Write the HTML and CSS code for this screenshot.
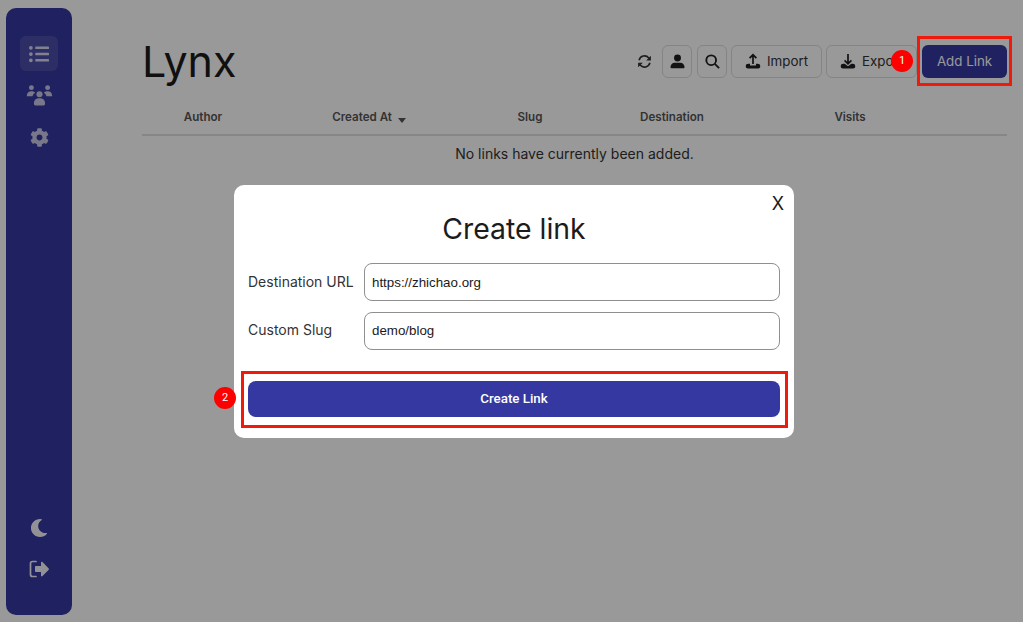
FILE: index.html
```html
<!DOCTYPE html>
<html lang="en">
<head>
<meta charset="utf-8">
<title>Lynx</title>
<link rel="stylesheet" href="styles.css">
</head>
<body>
<div class="app">
  <aside class="sidebar">
    <nav class="side-group">
      <a class="side-item active"><svg class="side-icon list" viewBox="0 0 512 512"><path d="M48 48a48 48 0 1 0 48 48 48 48 0 0 0-48-48zm0 160a48 48 0 1 0 48 48 48 48 0 0 0-48-48zm0 160a48 48 0 1 0 48 48 48 48 0 0 0-48-48zm448 16H176a16 16 0 0 0-16 16v32a16 16 0 0 0 16 16h320a16 16 0 0 0 16-16v-32a16 16 0 0 0-16-16zm0-320H176a16 16 0 0 0-16 16v32a16 16 0 0 0 16 16h320a16 16 0 0 0 16-16V80a16 16 0 0 0-16-16zm0 160H176a16 16 0 0 0-16 16v32a16 16 0 0 0 16 16h320a16 16 0 0 0 16-16v-32a16 16 0 0 0-16-16z"/></svg></a>
      <a class="side-item"><svg class="side-icon wide" viewBox="0 0 640 512"><circle cx="128" cy="70" r="58"/><circle cx="512" cy="70" r="58"/><circle cx="320" cy="226" r="72"/><path d="M20 270c0-72 40-114 108-114 40 0 70 12 88 36-34 20-54 46-60 84H48c-16 0-28 0-28-6zM620 270c0-72-40-114-108-114-40 0-70 12-88 36 34 20 54 46 60 84h108c16 0 28 0 28-6zM320 322c84 0 132 44 132 126 0 30-14 44-36 44H224c-22 0-36-14-36-44 0-82 48-126 132-126z"/></svg></a>
      <a class="side-item"><svg class="side-icon" viewBox="0 0 512 512"><path d="M487.4 315.7l-42.6-24.6c4.3-23.2 4.3-47 0-70.2l42.6-24.6c4.9-2.8 7.1-8.6 5.5-14-11.1-35.6-30-67.8-54.7-94.6-3.8-4.1-10-5.1-14.8-2.3L380.8 110c-17.9-15.4-38.5-27.3-60.8-35.1V25.8c0-5.6-3.9-10.5-9.4-11.7-36.7-8.2-74.3-7.8-109.2 0-5.5 1.2-9.4 6.1-9.4 11.7V75c-22.2 7.9-42.8 19.8-60.8 35.1L88.7 85.5c-4.9-2.8-11-1.9-14.8 2.3-24.7 26.7-43.6 58.9-54.7 94.6-1.7 5.4.6 11.2 5.5 14L67.3 221c-4.3 23.2-4.3 47 0 70.2l-42.6 24.6c-4.9 2.8-7.1 8.6-5.5 14 11.1 35.6 30 67.8 54.7 94.6 3.8 4.1 10 5.1 14.8 2.3l42.6-24.6c17.9 15.4 38.5 27.3 60.8 35.1v49.2c0 5.6 3.9 10.5 9.4 11.7 36.7 8.2 74.3 7.8 109.2 0 5.5-1.2 9.4-6.1 9.4-11.7v-49.2c22.2-7.9 42.8-19.8 60.8-35.1l42.6 24.6c4.9 2.8 11 1.9 14.8-2.3 24.7-26.7 43.6-58.9 54.7-94.6 1.5-5.5-.7-11.3-5.6-14.1zM256 336c-44.1 0-80-35.9-80-80s35.9-80 80-80 80 35.9 80 80-35.9 80-80 80z"/></svg></a>
    </nav>
    <nav class="side-group side-bottom">
      <a class="side-item"><svg class="side-icon moon" viewBox="0 0 512 512"><path d="M283.211 512c78.962 0 151.079-35.925 198.857-94.792 7.068-8.708-.639-21.43-11.562-19.35-124.2 23.654-238.256-71.576-238.256-196.954 0-72.222 38.662-138.635 101.498-174.394 9.686-5.512 7.25-20.197-3.756-22.23A258.156 258.156 0 0 0 283.211 0c-141.309 0-256 114.511-256 256 0 141.309 114.511 256 256 256z"/></svg></a>
      <a class="side-item"><svg class="side-icon logout" viewBox="0 0 20 20"><path class="bracket" d="M7 2.500H3.500C2.500 2.500 1.500 3.500 1.500 4.500v11c0 1 1 2 2 2H7"/><path d="M12 3.600c0-.8.900-1.200 1.500-.6l6 6.200c.5.500.5 1.200 0 1.700l-6 6.200c-.6.600-1.500.2-1.500-.6V13H7c-.6 0-1-.4-1-1V8c0-.6.400-1 1-1h5z"/></svg></a>
    </nav>
  </aside>
  <main class="main">
    <header class="topbar">
      <h1 class="title">Lynx</h1>
      <div class="actions">
        <button class="plain-btn"><svg class="sync-icon" viewBox="0 0 16 16"><path class="line" d="M2.200 6.600A6 6 0 0 1 12.600 4.200L14 5.600M13.800 9.400A6 6 0 0 1 3.400 11.800L2 10.400"/><path d="M14.800 1.800v5h-5zM1.200 14.200v-5h5z"/></svg></button>
        <button class="btn icon-btn"><svg class="btn-icon user" viewBox="0 0 16 16"><circle cx="8" cy="4.300" r="3.700"/><path d="M1.500 15.200c-.6 0-1-.4-1-1C.5 11.400 2.500 9.200 5 9.200h6c2.500 0 4.500 2.200 4.500 5 0 .6-.4 1-1 1z"/></svg></button>
        <button class="btn icon-btn search-btn"><svg class="btn-icon search" viewBox="0 0 16 16"><circle class="line" cx="6.600" cy="6.600" r="5.200"/><path class="line" d="M10.500 10.500 15 15"/></svg></button>
        <button class="btn text-btn"><svg class="btn-icon tray" viewBox="0 0 16 16"><path class="line" d="M8 11V2M4.600 5.200 8 1.800l3.400 3.400"/><path d="M.8 13c0-1.300 1-2.200 2.500-2.200H5v1.700h6v-1.700h1.700c1.500 0 2.500.9 2.500 2.200v.8c0 1-1 1.700-2 1.700H2.800c-1 0-2-.7-2-1.700z"/></svg>Import</button>
        <button class="btn text-btn"><svg class="btn-icon tray" viewBox="0 0 16 16"><path class="line" d="M8 1v9.500M4.600 7.400 8 10.800l3.400-3.400"/><path d="M.8 13c0-1.300 1-2.200 2.500-2.200h1.400L8 13.200l3.300-2.400h1.400c1.500 0 2.500.9 2.500 2.200v.8c0 1-1 1.700-2 1.700H2.800c-1 0-2-.7-2-1.700z"/></svg>Export</button>
        <button class="add-btn">Add Link</button>
      </div>
    </header>
    <section class="table">
      <div class="table-head">
        <span>Author</span>
        <span>Created At <svg class="caret" viewBox="0 0 10 6"><path d="M0 0h10L5 6z"/></svg></span>
        <span>Slug</span>
        <span>Destination</span>
        <span>Visits</span>
        <span></span>
      </div>
      <p class="empty">No links have currently been added.</p>
    </section>
  </main>
</div>
<div class="overlay"></div>
<div class="modal">
  <button class="close">X</button>
  <h2 class="modal-title">Create link</h2>
  <form class="form">
    <label class="field"><span class="field-label">Destination URL</span><input class="field-input" value="https://zhichao.org"></label>
    <label class="field field-slug"><span class="field-label">Custom Slug</span><input class="field-input" value="demo/blog"></label>
    <button type="button" class="submit">Create Link</button>
  </form>
</div>
<div class="mark mark-add"></div>
<div class="mark mark-submit"></div>
<div class="badge badge-1">1</div>
<div class="badge badge-2">2</div>
</body>
</html>
```
FILE: styles.css
```css
* { box-sizing: border-box; }
html, body { height: 100%; }
body { margin: 0; background: #fff; color: #1a1a1a; font-family: Inter, "Liberation Sans", sans-serif; overflow: hidden; }
.app { display: flex; height: 622px; padding: 8px 16px 7px 6px; }
.sidebar { width: 66px; flex: none; background: #3538a0; border-radius: 10px; display: flex; flex-direction: column; justify-content: space-between; align-items: center; padding: 28px 0 29px; }
.side-group { display: flex; flex-direction: column; gap: 7px; align-items: center; }
.side-bottom { gap: 6px; }
.side-item { width: 38px; height: 35px; border-radius: 6px; display: flex; align-items: center; justify-content: center; }
.side-item.active { background: #4b4eaa; }
.side-icon { width: 19px; height: 19px; fill: #c9c9e6; }
.side-icon.list { width: 20px; height: 20px; fill: #d8d8ee; }
.side-icon.wide { width: 27px; height: 27px; }
.side-icon.moon { width: 18px; height: 18px; fill: #fff; opacity: .95; }
.side-icon.logout { width: 20px; height: 20px; fill: #fff; opacity: .95; }
.bracket { fill: none; stroke: #fff; stroke-width: 1.700; stroke-linecap: round; }
.main { flex: 1; min-width: 0; padding: 0 0 0 70px; }
.topbar { display: flex; align-items: center; justify-content: space-between; height: 87px; padding: 19px 0 0 0; }
.title { margin: 0; font-size: 43px; line-height: 50px; font-weight: 400; color: #1c1c1c; }
.actions { display: flex; align-items: center; gap: 4px; }
.plain-btn { width: 28px; height: 33px; padding: 0; border: 0; background: none; display: flex; align-items: center; justify-content: center; }
.btn { height: 33px; border: 1px solid #dcdcdc; border-radius: 6px; background: #fff; color: #333; font: 400 13.330px Inter, sans-serif; display: flex; align-items: center; justify-content: center; }
.icon-btn { width: 30px; padding: 0; }
.search-btn { margin-left: 1px; }
.text-btn { width: 91px; gap: 6px; padding: 0; }
.sync-icon { width: 15px; height: 15px; fill: #333; }
.btn-icon { width: 14px; height: 14px; fill: #1f1f1f; }
.btn-icon.user { width: 15px; height: 15px; }
.btn-icon.search { width: 15px; height: 15px; }
.btn-icon.tray { width: 16px; height: 16px; }
.line { fill: none; stroke: currentColor; stroke-width: 1.700; color: #1f1f1f; }
.search .line { stroke-width: 2; }
.sync-icon .line { color: #333; }
.add-btn { width: 85px; height: 33px; margin-left: 1px; border: 0; border-radius: 6px; background: #3538a0; color: #fff; font: 400 13.330px Inter, sans-serif; padding: 0; }
.table-head { display: grid; grid-template-columns: 122px 210px 112px 172px 184px 65px; height: 41px; align-items: start; border-bottom: 2px solid #e0e0e0; font-size: 11.600px; line-height: 16px; font-weight: 600; color: #555; text-align: center; padding-top: 14px; }
.caret { width: 8px; height: 5px; fill: #555; margin-left: 3px; vertical-align: -2px; }
.empty { margin: 9px 0 0; text-align: center; font-size: 14px; line-height: 18px; color: #333; }
.overlay { position: fixed; inset: 0; background: rgba(0, 0, 0, .4); }
.modal { position: fixed; left: 234px; top: 185px; width: 560px; height: 253px; background: #fff; border-radius: 10px; padding: 0 14px; }
.close { position: absolute; right: 10px; top: 8px; border: 0; background: none; padding: 0; font: 400 18px Inter, sans-serif; color: #1a1a1a; }
.modal-title { margin: 26px 0 0; text-align: center; font-size: 28.400px; line-height: 36px; font-weight: 400; color: #1c1c1c; }
.form { display: flex; flex-direction: column; margin-top: 16px; }
.field { display: flex; align-items: center; height: 38px; margin-bottom: 11px; }
.field-label { width: 116px; flex: none; font-size: 14px; color: #333; margin-top: -2px; }
.field-slug .field-label { margin-top: -4px; }
.field-slug .field-input { padding-bottom: 2px; }
.field-input { flex: 1; min-width: 0; height: 38px; border: 1px solid #8f8f8f; border-radius: 8px; padding: 0 7px; font: 400 13.330px "Liberation Sans", Arial, sans-serif; color: #1a1a1a; background: #fff; outline: 0; }
.submit { height: 36px; margin-top: 20px; padding: 0 0 1px; border: 0; border-radius: 8px; background: #3538a0; color: #fff; font: 500 13.330px Roboto, "Liberation Sans", sans-serif; }
.mark { position: fixed; border: 3px solid #f01a0c; }
.mark-add { left: 917px; top: 36px; width: 95px; height: 50px; }
.mark-submit { left: 241px; top: 371px; width: 547px; height: 57px; }
.badge { position: fixed; width: 22px; height: 22px; border-radius: 50%; background: #fd0100; color: #fff; font: 400 11px/22px Roboto, sans-serif; text-align: center; }
.badge-1 { left: 891px; top: 50px; }
.badge-2 { left: 214px; top: 387px; }
```
